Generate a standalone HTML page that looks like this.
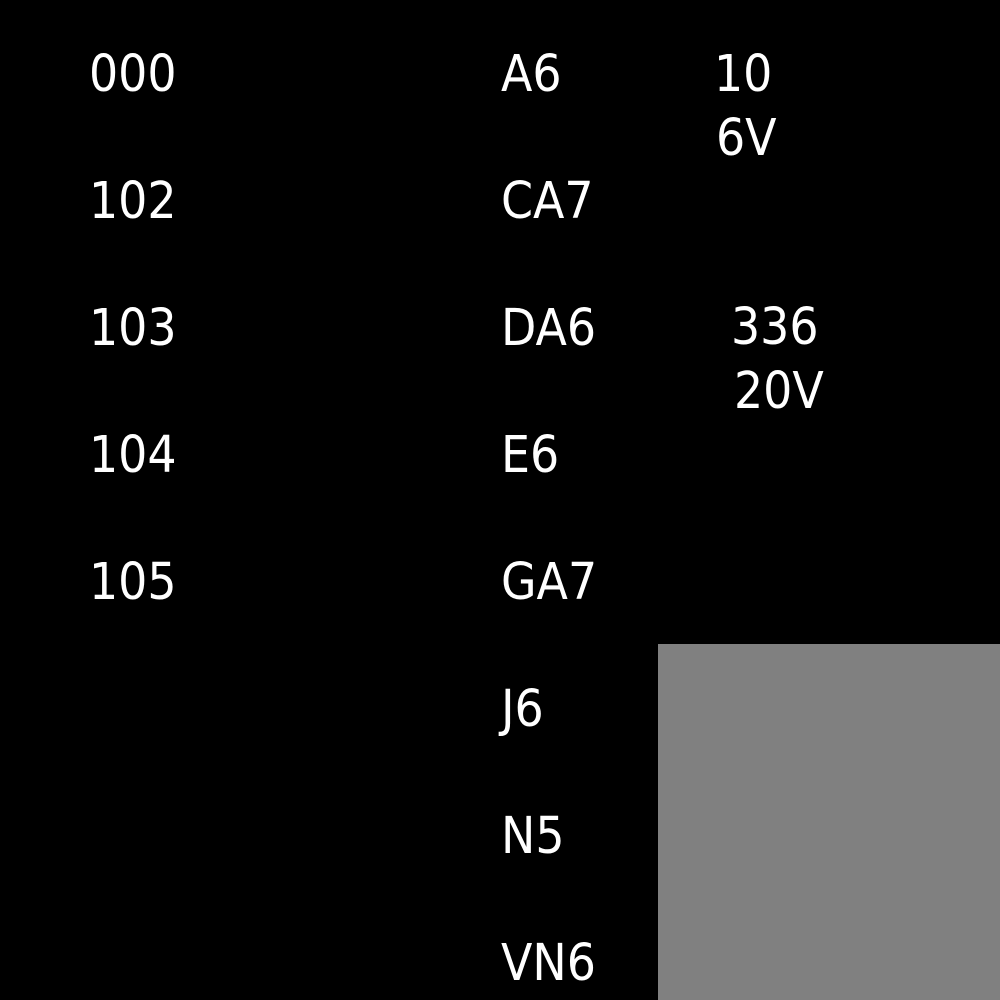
<!DOCTYPE html>
<html><head><style>
body{margin:0;width:1000px;height:1000px;background:#000;position:relative;overflow:hidden}
.t{position:absolute;color:#fff;font-family:"DejaVu Sans Condensed","DejaVu Sans",sans-serif;font-stretch:condensed;font-size:51px;line-height:1;white-space:nowrap}
.g{position:absolute;left:658px;top:644px;width:342px;height:356px;background:#808080}
</style></head><body>
<div class="g"></div>
<div class="t" style="left:89px;top:49px">000</div>
<div class="t" style="left:89px;top:176px">102</div>
<div class="t" style="left:89px;top:303px">103</div>
<div class="t" style="left:89px;top:430px">104</div>
<div class="t" style="left:89px;top:557px">105</div>
<div class="t" style="left:501px;top:49px">A6</div>
<div class="t" style="left:501px;top:176px">CA7</div>
<div class="t" style="left:501px;top:303px">DA6</div>
<div class="t" style="left:501px;top:430px">E6</div>
<div class="t" style="left:501px;top:557px">GA7</div>
<div class="t" style="left:501px;top:684px">J6</div>
<div class="t" style="left:501px;top:811px">N5</div>
<div class="t" style="left:501px;top:938px">VN6</div>
<div class="t" style="left:714px;top:49px">10</div>
<div class="t" style="left:716px;top:113px">6V</div>
<div class="t" style="left:731px;top:302px">336</div>
<div class="t" style="left:734px;top:366px">20V</div>
</body></html>
